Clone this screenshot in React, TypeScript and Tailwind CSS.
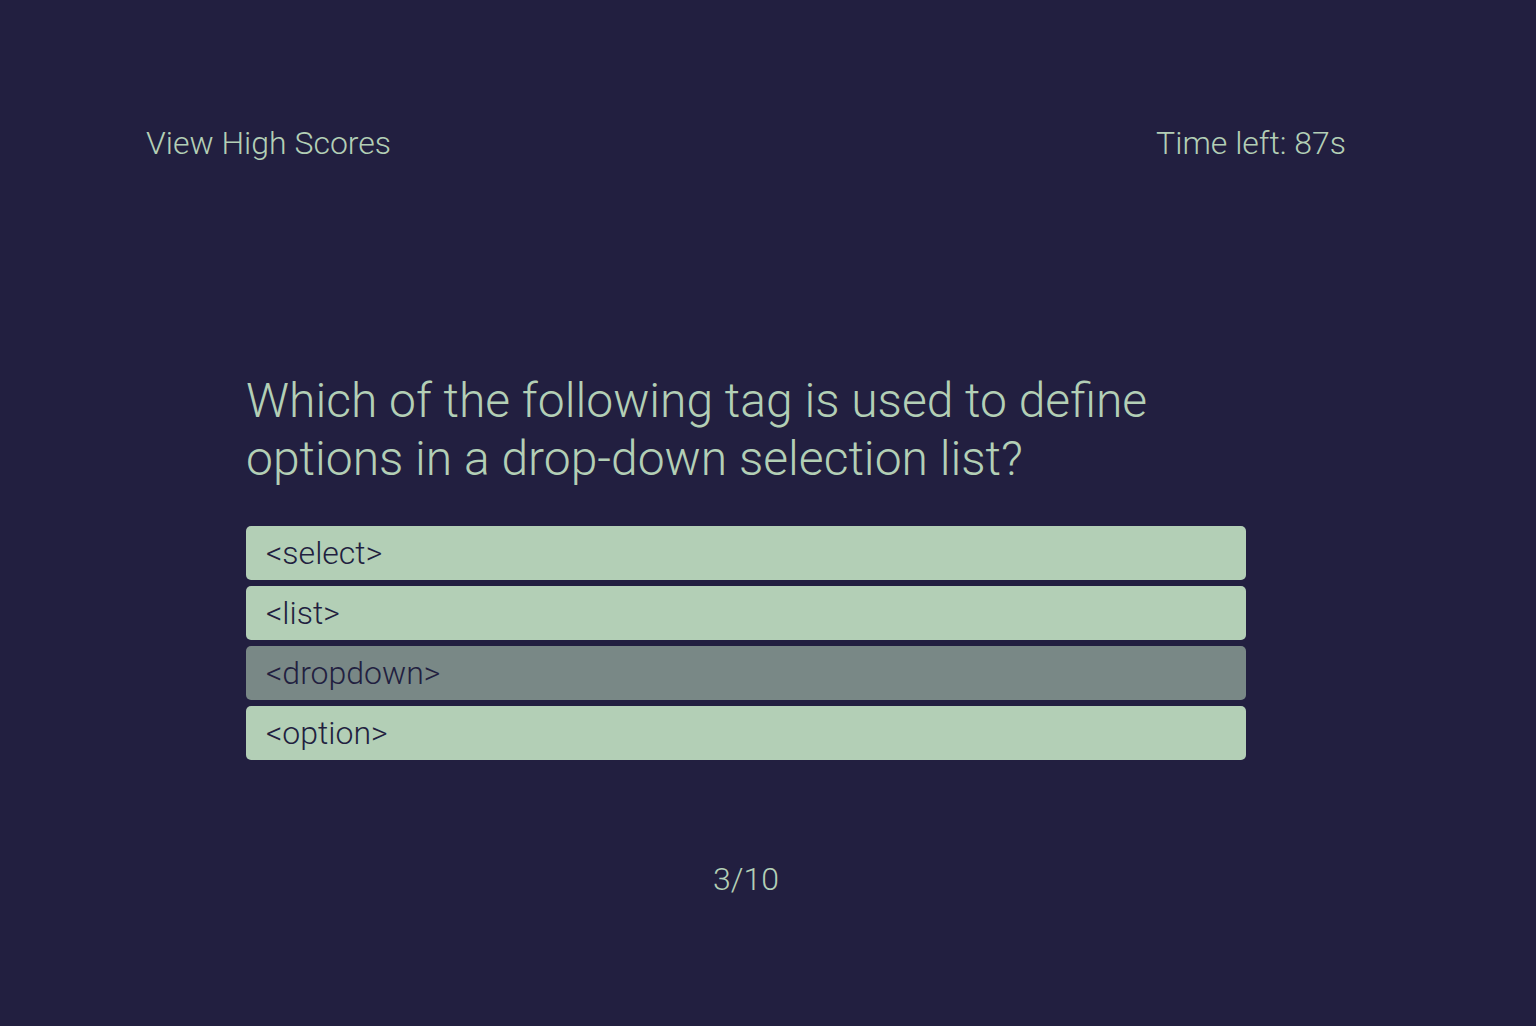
import React from "react";

const options = [
  { label: "<select>", dim: false },
  { label: "<list>", dim: false },
  { label: "<dropdown>", dim: true },
  { label: "<option>", dim: false },
];

export default function App() {
  return (
    <div
      className="min-h-screen w-full bg-[#221f40] text-[#b3cfb6]"
      style={{ fontFamily: "Roboto, 'Liberation Sans', sans-serif" }}
    >
      <div className="w-[1492px] flex flex-col items-center">
        <header className="w-[1200px] pt-[124px] flex justify-between items-center text-[32px] leading-[38px] font-light">
          <span>View High Scores</span>
          <span>Time left: 87s</span>
        </header>

        <main className="w-[1000px] mt-[210px] flex flex-col">
          <h2 className="text-[48px] leading-[58px] font-light">
            Which of the following tag is used to define options in a drop-down selection list?
          </h2>
          <div className="mt-[38px] flex flex-col gap-[6px]">
            {options.map((o) => (
              <button
                key={o.label}
                className={
                  "h-[54px] w-full rounded-[5px] pl-[20px] text-left text-[32px] font-light text-[#221f40] " +
                  (o.dim ? "bg-[#798886]" : "bg-[#b3cfb6]")
                }
              >
                {o.label}
              </button>
            ))}
          </div>
        </main>

        <div className="mt-[100px] text-[32px] leading-[38px] font-light">3/10</div>
      </div>
    </div>
  );
}
